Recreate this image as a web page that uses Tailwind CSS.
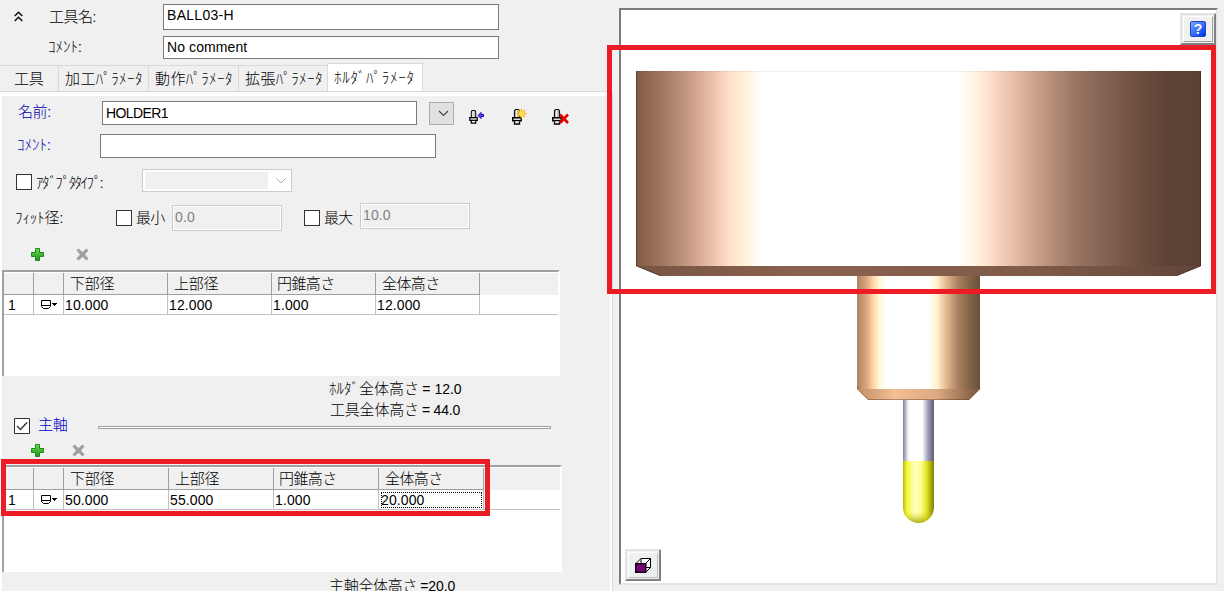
<!DOCTYPE html>
<html lang="ja">
<head>
<meta charset="utf-8">
<title>工具</title>
<script src="https://cdn.jsdelivr.net/npm/@tailwindcss/browser@4"></script>
</head>
<body class="bg-[#f0f0f0]">
<svg class="absolute size-0">
  <defs>
    <linearGradient id="pg" x1="0" y1="0" x2="0" y2="1"><stop offset="0" stop-color="#6fd84f"/><stop offset="1" stop-color="#169a16"/></linearGradient>
    <symbol id="plus" viewBox="0 0 13 13"><path d="M4.5.5h4v4h4v4h-4v4h-4v-4h-4v-4h4z" fill="url(#pg)" stroke="#1c8a1c"/></symbol>
    <symbol id="cross" viewBox="0 0 13 13"><path d="M2.5.5L6.5 4 10.500.5 12.500 2.500 9 6.500l3.500 4-2 2-4-3.500-4 3.500-2-2 3.500-4L.5 2.500z" fill="#a0a0a0"/></symbol>
    <symbol id="cup" viewBox="0 0 18 10"><path d="M1.500.5h9v6l-2 2h-5l-2-2zM1.500 5.500h9" fill="#fff" stroke="#000"/><path d="M12 3h5v1h-1v1h-1v1h-1V5h-1V4h-1z"/></symbol>
    <symbol id="holder" viewBox="0 0 10 16"><path d="M2.500 9V2l1-1.500h3l1 1.500v7z" fill="#c4c4c4" stroke="#111" stroke-width="1.200"/><path d="M4.500 1.500V8" stroke="#fff"/><path d="M.75 8.750h8.500v3H.75z" fill="#ddd" stroke="#000" stroke-width="1.400"/><path d="M2.500 12.500v2.500h5v-2.500" fill="#fff" stroke="#000" stroke-width="1.400"/></symbol>
  </defs>
</svg>
<main class="relative flex h-[591px] w-[1224px] overflow-hidden bg-[#f0f0f0] font-['Noto_Sans_CJK_JP',sans-serif] text-[15px] leading-[20px] font-light whitespace-nowrap text-black">
  <section class="flex w-[610px] flex-none flex-col">
    <div class="flex h-[34px] items-start pt-1">
      <svg class="mt-[7px] ml-[14px] h-[11px] w-[9px]" viewBox="0 0 9 11" fill="none" stroke="#111" stroke-width="1.500"><path d="M.7 5L4.500 1.200 8.300 5M.7 10l3.800-3.800L8.300 10"/></svg>
      <div class="mt-[2px] ml-[26px] w-[114px] tracking-[-0.5px]">工具名:</div>
      <div class="h-[26px] w-[336px] border border-[#7a7a7a] bg-white pl-[3px] font-['Liberation_Sans',sans-serif] text-[14px] leading-[21px] tracking-[0.3px]">BALL03-H</div>
    </div>
    <div class="flex h-[30px] items-start pt-[2px]">
      <div class="ml-[48px] w-[115px]">ｺﾒﾝﾄ:</div>
      <div class="h-[23px] w-[336px] border border-[#7a7a7a] bg-white pl-[3px] font-['Liberation_Sans',sans-serif] text-[14px] leading-[21px] tracking-[0.1px]">No comment</div>
    </div>
    <nav class="flex h-[32px] items-end border-b-4 border-white">
      <div class="flex h-[29px] w-full flex-none items-end border-b border-[#dadada]">
        <div class="h-[26px] w-[59px] border-t border-r border-[#d9d9d9] pt-[2px] pl-[14px] tracking-[-0.3px]">工具</div>
        <div class="h-[26px] w-[90px] border-t border-r border-[#d9d9d9] pt-[2px] pl-[6px] tracking-[0.4px]">加工ﾊﾟﾗﾒｰﾀ</div>
        <div class="h-[26px] w-[90px] border-t border-r border-[#d9d9d9] pt-[2px] pl-[6px] tracking-[0.4px]">動作ﾊﾟﾗﾒｰﾀ</div>
        <div class="h-[26px] w-[88px] border-t border-[#d9d9d9] pt-[2px] pl-[6px] tracking-[0.4px]">拡張ﾊﾟﾗﾒｰﾀ</div>
        <div class="h-[28px] w-[96px] border border-b-0 border-[#d9d9d9] bg-white pt-[3px] pl-[6px] tracking-[0.7px]">ﾎﾙﾀﾞﾊﾟﾗﾒｰﾀ</div>
      </div>
    </nav>
    <div class="flex flex-1 flex-col border-l-2 border-white">
      <div class="flex h-[36px] items-start pt-[5px]">
        <div class="w-[100px] pl-[16px] tracking-[-0.4px] text-[#0000a8]">名前:</div>
        <div class="h-[24px] w-[315px] border border-[#7a7a7a] bg-white pl-[3px] font-['Liberation_Sans',sans-serif] text-[14px] leading-[23px] tracking-[-0.6px]">HOLDER1</div>
        <div class="mt-[1px] ml-[12px] flex h-[23px] w-[25px] items-center justify-center border border-[#adadad] bg-[#e1e1e1]"><svg class="ml-1 h-[7px] w-[11px]" viewBox="0 0 11 7" fill="none" stroke="#444" stroke-width="1.200"><path d="M1 1l4.500 4.500L10 1"/></svg></div>
        <svg class="mt-[7px] ml-[15px] h-[18px] w-[18px]" viewBox="0 0 18 18"><use href="#holder" x="0" y="2" width="9" height="14"/><path d="M9 7.500l3-3v2h2.500v2H12v2z" fill="#5a50ff" stroke="#1800a8"/></svg>
        <svg class="mt-[7px] ml-[24px] h-[18px] w-[18px]" viewBox="0 0 18 18"><use href="#holder" x="1" y="1" width="10" height="16"/><path d="M10.500.5v10M5.500 5.500h10M7 2l7 7M14 2l-7 7" stroke="#f4b000" stroke-width="1.300"/><circle cx="10.500" cy="5.500" r="2.500" fill="#ffdf50"/></svg>
        <svg class="mt-[7px] ml-[23px] h-[18px] w-[18px]" viewBox="0 0 18 18"><use href="#holder" x="0" y="1" width="10" height="16"/><path d="M8 6.500l8 8.500M16 6.500l-8 8.500" stroke="#e60000" stroke-width="2.600"/></svg>
      </div>
      <div class="flex h-[35px] items-start pt-[2px]">
        <div class="w-[98px] pl-[15px] text-[#0000a8]">ｺﾒﾝﾄ:</div>
        <div class="h-[24px] w-[336px] border border-[#7a7a7a] bg-white"></div>
      </div>
      <div class="flex h-[36px] items-start pt-[2px]">
        <div class="mt-[5px] ml-[14px] size-[16px] border border-[#333] bg-white"></div>
        <div class="mt-[3px] ml-[4px] w-[106px] tracking-[-1.600px]">ｱﾀﾞﾌﾟﾀﾀｲﾌﾟ:</div>
        <div class="flex h-[23px] w-[150px] items-center justify-between border border-[#ccc] bg-white pr-[5px] pl-[2px]"><div class="h-[17px] w-[123px] bg-[#f0f0f0]"></div><svg class="h-[6px] w-[10px]" viewBox="0 0 10 6" fill="none" stroke="#aaa"><path d="M.5.5L5 5 9.500.5"/></svg></div>
      </div>
      <div class="flex h-[40px] items-start">
        <div class="mt-[4px] ml-[13px] w-[101px] tracking-[-0.1px]">ﾌｨｯﾄ径:</div>
        <div class="mt-[7px] size-[16px] border border-[#333] bg-white"></div>
        <div class="mt-[4px] ml-[4px] w-[36px] tracking-[-0.8px]">最小</div>
        <div class="mt-[2px] h-[26px] w-[110px] border border-[#ccc] pl-[2px] font-['Liberation_Sans',sans-serif] text-[14px] leading-[22px] tracking-[0.1px] text-[#808080] inset-ring inset-ring-white">0.0</div>
        <div class="mt-[7px] ml-[22px] size-[16px] border border-[#333] bg-white"></div>
        <div class="mt-[4px] ml-[4px] w-[36px] tracking-[-0.8px]">最大</div>
        <div class="h-[26px] w-[110px] border border-[#ccc] pl-[2px] font-['Liberation_Sans',sans-serif] text-[14px] leading-[22px] tracking-[0.1px] text-[#808080] inset-ring inset-ring-white">10.0</div>
      </div>
      <div class="flex h-[27px] items-start pt-[5px] pl-[29px]">
        <svg class="size-[13px]"><use href="#plus"/></svg>
        <svg class="ml-[32px] size-[13px]"><use href="#cross"/></svg>
      </div>
      <div class="h-[106px] w-[558px] border-t-2 border-r-2 border-l-2 border-t-[#a0a0a0] border-r-white border-l-[#a0a0a0] bg-white">
        <div class="flex h-[23px] border-t border-white bg-[#f0f0f0]">
          <div class="w-[30px] border-r border-b border-[#a0a0a0]"></div>
          <div class="w-[30px] border-r border-b border-[#a0a0a0]"></div>
          <div class="w-[104px] border-r border-b border-[#a0a0a0] pl-[6px] tracking-[-0.2px]">下部径</div>
          <div class="w-[104px] border-r border-b border-[#a0a0a0] pl-[6px] tracking-[-0.2px]">上部径</div>
          <div class="w-[104px] border-r border-b border-[#a0a0a0] pl-[5px] tracking-[-0.6px]">円錐高さ</div>
          <div class="w-[104px] border-r border-b border-[#a0a0a0] pl-[6px] tracking-[-0.6px]">全体高さ</div>
        </div>
        <div class="flex h-[20px] border-b border-[#c0c0c0] font-['Liberation_Sans',sans-serif] text-[14px] tracking-[0.1px]">
          <div class="w-[30px] border-r border-[#c0c0c0] pl-[4px]">1</div>
          <div class="flex w-[30px] items-center border-r border-[#c0c0c0] pl-[6px]"><svg class="h-[10px] w-[18px]"><use href="#cup"/></svg></div>
          <div class="w-[104px] border-r border-[#c0c0c0] pl-px">10.000</div>
          <div class="w-[104px] border-r border-[#c0c0c0] pl-px">12.000</div>
          <div class="w-[104px] border-r border-[#c0c0c0] pl-px">1.000</div>
          <div class="w-[104px] border-r border-[#c0c0c0] pl-px">12.000</div>
        </div>
      </div>
      <div class="mt-[2px] h-[21px] pl-[327px]">ﾎﾙﾀﾞ全体高さ <span class="font-['Liberation_Sans',sans-serif] text-[14px]">= 12.0</span></div>
      <div class="h-[19px] pl-[328px] tracking-[-0.2px]">工具全体高さ <span class="font-['Liberation_Sans',sans-serif] text-[14px]">= 44.0</span></div>
      <div class="flex h-[25px] items-start">
        <svg class="ml-[12px] size-[16px]" viewBox="0 0 16 16"><path d="M.5.5h15v15H.5z" fill="#fff" stroke="#333"/><path d="M3 8l3.500 3.500L13 4.500" fill="none" stroke="#333" stroke-width="1.400"/></svg>
        <div class="-mt-[4px] ml-[8px] w-[60px] tracking-[-0.3px] text-[#0000c0]">主軸</div>
        <div class="mt-[8px] h-[3px] w-[453px] border border-[#a0a0a0] bg-white"></div>
      </div>
      <div class="flex h-[22px] items-start pt-[1px] pl-[29px]">
        <svg class="size-[13px]"><use href="#plus"/></svg>
        <svg class="ml-[28px] size-[13px]"><use href="#cross"/></svg>
      </div>
      <div class="h-[107px] w-[560px] border-t-2 border-r-2 border-l-2 border-t-[#a0a0a0] border-r-white border-l-[#a0a0a0] bg-white">
        <div class="flex h-[23px] border-t border-white bg-[#f0f0f0]">
          <div class="w-[30px] border-r border-b border-[#a0a0a0]"></div>
          <div class="w-[30px] border-r border-b border-[#a0a0a0]"></div>
          <div class="w-[105px] border-r border-b border-[#a0a0a0] pl-[6px] tracking-[-0.2px]">下部径</div>
          <div class="w-[105px] border-r border-b border-[#a0a0a0] pl-[6px] tracking-[-0.2px]">上部径</div>
          <div class="w-[105px] border-r border-b border-[#a0a0a0] pl-[5px] tracking-[-0.6px]">円錐高さ</div>
          <div class="w-[105px] border-r border-b border-[#a0a0a0] pl-[6px] tracking-[-0.6px]">全体高さ</div>
        </div>
        <div class="flex h-[20px] border-b border-[#c0c0c0] font-['Liberation_Sans',sans-serif] text-[14px] tracking-[0.1px]">
          <div class="w-[30px] border-r border-[#c0c0c0] pl-[4px]">1</div>
          <div class="flex w-[30px] items-center border-r border-[#c0c0c0] pl-[6px]"><svg class="h-[10px] w-[18px]"><use href="#cup"/></svg></div>
          <div class="w-[105px] border-r border-[#c0c0c0] pl-px">50.000</div>
          <div class="w-[105px] border-r border-[#c0c0c0] pl-px">55.000</div>
          <div class="w-[105px] border-r border-[#c0c0c0] pl-px">1.000</div>
          <div class="w-[105px] border-r border-[#c0c0c0] py-[2px] pr-[1px] pl-[2px]"><div class="h-[16px] border border-dotted border-black leading-[14px]"><span class="-ml-px">20.000</span></div></div>
        </div>
      </div>
      <div class="mt-[3px] h-[16px] pl-[327px] tracking-[-0.3px]">主軸全体高さ <span class="font-['Liberation_Sans',sans-serif] text-[14px] tracking-[-0.1px]">=20.0</span></div>
    </div>
  </section>

  <section class="flex flex-1 flex-col">
    <div class="h-[93px] flex-none"></div>
    <div class="w-[3px] flex-1 border-r border-l-2 border-r-[#d8d8d8] border-l-white"></div>
  </section>

  <section class="mt-[8px] mr-[6px] h-[577px] w-[599px] flex-none border-2 border-t-[#7b7b7b] border-r-[#e6e6e6] border-b-[#e6e6e6] border-l-[#7b7b7b] bg-white">
    <div class="relative h-full w-full">
      <svg class="h-[573px] w-[595px]" viewBox="621 10 595 573">
        <defs>
          <linearGradient id="big" gradientUnits="userSpaceOnUse" x1="636" x2="1201" y1="0" y2="0">
            <stop offset="0" stop-color="#7f5b46"/><stop offset=".045" stop-color="#a07460"/><stop offset=".08" stop-color="#bb9078"/><stop offset=".127" stop-color="#e6b9a4"/><stop offset=".165" stop-color="#ffe0c9"/><stop offset=".195" stop-color="#fff1dc"/><stop offset=".22" stop-color="#fff"/>
            <stop offset=".57" stop-color="#fff"/><stop offset=".605" stop-color="#fff1de"/><stop offset=".625" stop-color="#ffdfcc"/><stop offset=".68" stop-color="#dfb5a0"/><stop offset=".74" stop-color="#b28b77"/><stop offset=".78" stop-color="#997561"/><stop offset=".81" stop-color="#8c6a59"/><stop offset=".87" stop-color="#755443"/><stop offset=".94" stop-color="#5e4335"/><stop offset="1" stop-color="#594134"/>
          </linearGradient>
          <linearGradient id="lip"><stop offset="0" stop-color="#7a5543"/><stop offset=".3" stop-color="#89614f"/><stop offset=".7" stop-color="#805b48"/><stop offset="1" stop-color="#62463a"/></linearGradient>
          <linearGradient id="mid"><stop offset="0" stop-color="#b18061"/><stop offset=".08" stop-color="#dba780"/><stop offset=".13" stop-color="#ffd3a5"/><stop offset=".18" stop-color="#fff8d8"/><stop offset=".24" stop-color="#fff"/><stop offset=".58" stop-color="#fff"/><stop offset=".65" stop-color="#fff3cc"/><stop offset=".72" stop-color="#e9bd94"/><stop offset=".82" stop-color="#a88260"/><stop offset=".93" stop-color="#7e6045"/><stop offset="1" stop-color="#6c5038"/></linearGradient>
          <linearGradient id="mlip"><stop offset="0" stop-color="#c18c66"/><stop offset=".3" stop-color="#f4be94"/><stop offset=".65" stop-color="#dda980"/><stop offset="1" stop-color="#765539"/></linearGradient>
          <linearGradient id="shank"><stop offset="0" stop-color="#80808e"/><stop offset=".14" stop-color="#e0e0f0"/><stop offset=".2" stop-color="#fff"/><stop offset=".62" stop-color="#fff"/><stop offset=".8" stop-color="#a2a2b7"/><stop offset="1" stop-color="#5c5c70"/></linearGradient>
          <linearGradient id="ball"><stop offset="0" stop-color="#b8b800"/><stop offset=".13" stop-color="#f6f63c"/><stop offset=".4" stop-color="#ffffcb"/><stop offset=".58" stop-color="#ffff8c"/><stop offset=".75" stop-color="#e6e62c"/><stop offset="1" stop-color="#818100"/></linearGradient>
          <linearGradient id="shade" x1="0" y1="0" x2="0" y2="1"><stop offset=".82" stop-color="#c8c800" stop-opacity="0"/><stop offset="1" stop-color="#a0a000" stop-opacity=".85"/></linearGradient>
        </defs>
        <path d="M857 276h123v113H857z" fill="url(#mid)"/>
        <path d="M857 389h123l-11 11H868z" fill="url(#mlip)"/>
        <path d="M857.500 386v3l10.500 10.500h101L979.500 389v-3" fill="none" stroke="#4a3524" stroke-opacity=".4"/>
        <path d="M636 71h565v195H636z" fill="url(#big)"/>
        <path d="M636 266h565l-24 10H660z" fill="url(#lip)"/>
        <path d="M636.500 71v195l24 9.500" fill="none" stroke="#3c2a20" stroke-opacity=".6"/>
        <path d="M1200.500 71v195l-24 9.500" fill="none" stroke="#33241c" stroke-opacity=".6"/>
        <path d="M636 71.500h565" stroke="#4c3a28" stroke-opacity=".08"/>
        <path d="M903 400h31v61h-31z" fill="url(#shank)"/>
        <path d="M903 461h31v46a15.500 16 0 0 1-31 0z" fill="url(#ball)"/>
        <path d="M903 461h31v46a15.500 16 0 0 1-31 0z" fill="url(#shade)"/>
      </svg>
      <div class="absolute top-[3px] right-0 flex h-[32px] w-[36px] items-center justify-center border-2 border-t-[#e3e3e3] border-r-[#808080] border-b-[#808080] border-l-[#e3e3e3] bg-[#f0f0f0] p-px">
        <div class="flex h-full w-full items-center justify-center border border-t-white border-r-[#a0a0a0] border-b-[#a0a0a0] border-l-white">
          <div class="flex size-[16px] items-center justify-center rounded-[2px] border border-[#1747c8] bg-linear-to-br from-[#7aa6ff] to-[#0525e8] font-['Liberation_Sans',sans-serif] text-[14px] leading-[14px] font-bold text-white">?</div>
        </div>
      </div>
      <div class="absolute bottom-[2px] left-[4px] flex h-[32px] w-[36px] items-center justify-center border-2 border-t-[#e3e3e3] border-r-[#808080] border-b-[#808080] border-l-[#e3e3e3] bg-[#f0f0f0] p-px">
        <div class="flex h-full w-full items-center justify-center border border-t-white border-r-[#c0c0c0] border-b-[#c0c0c0] border-l-white">
          <svg class="h-[15px] w-[17px]" viewBox="0 0 17 15" stroke="#000"><path d="M1 5.500L6 .5h9.500v9l-5 5" fill="#fff"/><path d="M6 .5v5M10.500 5.500l5-5M10.500 9.500h5" fill="none"/><path d="M.75 5.750h10v8.500h-10z" fill="#800080" stroke-width="1.500"/></svg>
        </div>
      </div>
    </div>
  </section>

  <div class="absolute top-[45px] left-[607px] h-[249px] w-[609px] border-5 border-[#ed1c24]"></div>
  <div class="absolute top-[459px] left-[1px] h-[57px] w-[489px] border-5 border-[#ed1c24]"></div>
</main>
</body>
</html>
